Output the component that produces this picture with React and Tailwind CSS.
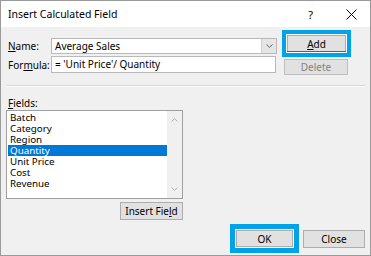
import React from "react";

const font = { fontFamily: '"Noto Sans", "Open Sans", sans-serif' };

function Btn({ children, className = "", disabled = false }) {
  return (
    <div
      className={`flex items-center justify-center border border-[#adadad] bg-[#e1e1e1] text-[10px] leading-none ${
        disabled ? "border-[#bfbfbf] bg-[#cccccc] text-[#838383]" : "text-black"
      } ${className}`}
    >
      {children}
    </div>
  );
}

export default function App() {
  const items = ["Batch", "Category", "Region", "Quantity", "Unit Price", "Cost", "Revenue"];
  return (
    <div
      className="w-[371px] h-[256px] flex flex-col border border-[#9a9a9a] bg-[#f0f0f0] text-black overflow-hidden"
      style={font}
    >
      {/* Title bar */}
      <div className="h-[26px] shrink-0 bg-white flex items-center pl-[7px]">
        <span className="text-[10.5px] leading-none">Insert Calculated Field</span>
        <span className="ml-auto text-[11px] leading-none mr-[33px]">?</span>
        <svg width="11" height="11" viewBox="0 0 11 11" className="mr-[13px]">
          <path d="M0.5 0.5 L10.5 10.5 M10.5 0.5 L0.5 10.5" stroke="#000" strokeWidth="1" />
        </svg>
      </div>

      {/* Body */}
      <div className="flex-1 flex flex-col">
        {/* top section */}
        <div className="flex pt-[3px] pl-[7px]">
          <div className="w-[269px] mt-[8px] flex flex-col">
            <div className="flex h-[16px] items-center">
              <span className="w-[43px] text-[10px] leading-none">
                <u className="underline-offset-1">N</u>ame:
              </span>
              <div className="flex-1 h-[16px] flex bg-white border border-[#b9b9b9]">
                <span className="flex-1 pl-[3px] text-[10px] leading-[14px]">Average Sales</span>
                <div className="w-[15px] h-[14px] bg-[#e5e5e5] border-l border-[#cfcfcf] flex items-center justify-center">
                  <svg width="7" height="4" viewBox="0 0 7 4">
                    <path d="M0.5 0.5 L3.5 3.3 L6.5 0.5" stroke="#606060" fill="none" strokeWidth="1" />
                  </svg>
                </div>
              </div>
            </div>
            <div className="flex h-[17px] items-center mt-[2px]">
              <span className="w-[43px] text-[10px] leading-none">
                For<u className="underline-offset-1">m</u>ula:
              </span>
              <div className="w-[225px] h-[17px] bg-white border border-[#b9b9b9] pl-[3px] text-[10px] leading-[15px]">
                = 'Unit Price'/ Quantity
              </div>
            </div>
          </div>
          <div className="ml-[5px] flex flex-col">
            <div className="w-[69px] h-[27px] border-4 border-[#00a2e8] bg-white p-[1px] flex flex-col">
              <div className="flex-1 bg-[#e1e1e1] border-x border-t border-[#adadad] flex items-center justify-center text-[10px] leading-none">
                <span>
                  <u className="underline-offset-1">A</u>dd
                </span>
              </div>
              <div className="h-[1px] bg-[#0078d7]"></div>
            </div>
            <Btn disabled className="w-[64px] h-[16px] mt-[2px] ml-[2px]">Delete</Btn>
          </div>
        </div>

        {/* separator */}
        <div className="ml-[6px] mr-[5px] mt-[10px] border-t border-[#d5d5d5] border-b border-b-white"></div>

        {/* Fields */}
        <div className="pl-[7px] mt-[10px] h-[12px] text-[10px] leading-[12px]">
          <u className="underline-offset-1">F</u>ields:
        </div>
        <div className="ml-[5px] mt-[1px] w-[177px] h-[89px] border border-[#a0a0a0] bg-white flex">
          <div className="flex-1 pt-[1px] pl-[1px]">
            {items.map((it) => (
              <div
                key={it}
                className={`h-[11px] leading-[11px] text-[9.8px] pl-[2px] overflow-hidden ${
                  it === "Quantity" ? "bg-[#0078d7] text-white" : ""
                }`}
              >
                {it}
              </div>
            ))}
          </div>
          <div className="w-[15px] bg-[#f0f0f0] flex flex-col items-center justify-between py-[7px]">
            <svg width="7" height="4" viewBox="0 0 7 4">
              <path d="M0.5 3.5 L3.5 0.7 L6.5 3.5" stroke="#b0b0b0" fill="none" strokeWidth="1" />
            </svg>
            <svg width="7" height="4" viewBox="0 0 7 4">
              <path d="M0.5 0.5 L3.5 3.3 L6.5 0.5" stroke="#b0b0b0" fill="none" strokeWidth="1" />
            </svg>
          </div>
        </div>
        <div className="ml-[119px] mt-[3px]">
          <Btn className="w-[63px] h-[18px]">
            <span>
              Insert Fie<u className="underline-offset-1">l</u>d
            </span>
          </Btn>
        </div>

        {/* bottom buttons */}
        <div className="flex justify-end items-center pr-[5px] mt-[4px]">
          <div className="w-[69px] h-[29px] border-[5px] border-[#00a2e8] bg-white p-[1px] flex">
            <Btn className="flex-1">OK</Btn>
          </div>
          <Btn className="w-[62px] h-[18px] ml-[4px]">Close</Btn>
        </div>
      </div>
    </div>
  );
}
